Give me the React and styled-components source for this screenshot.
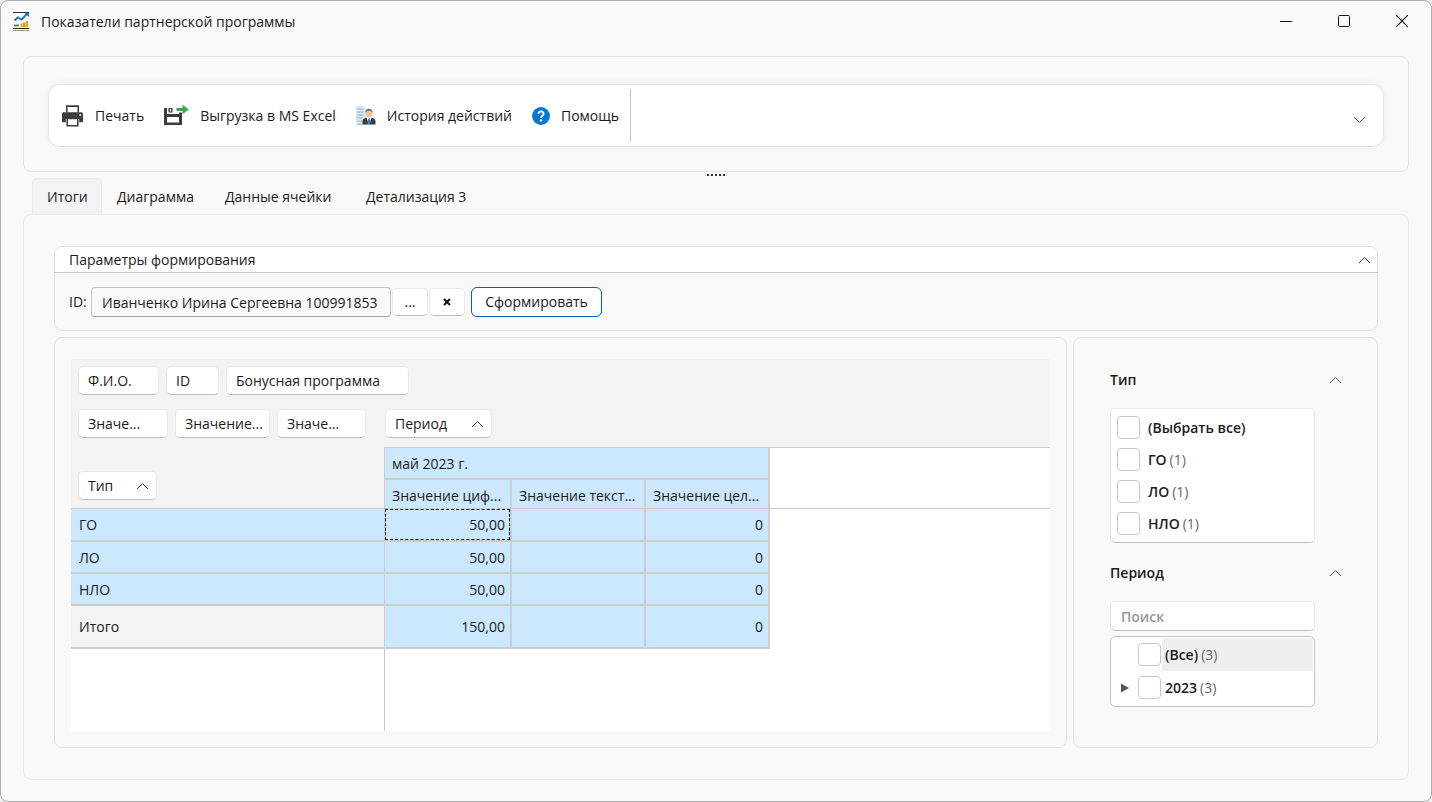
import React from "react";
import styled, { createGlobalStyle, css } from "styled-components";

const Global = createGlobalStyle`
  *, *::before, *::after { box-sizing: border-box; }
  body { margin: 0; background: #ececec; }
  body, button, input { font-family: "Open Sans", "Noto Sans", sans-serif; font-size: 14px; line-height: 20px; color: #1b1b1b; }
  button { cursor: pointer; padding: 0; border: 0; background: none; }
`;

const line = "#e3e3e3";
const selected = "#cce8ff";
const grid = "#cdcdcd";

const Window = styled.main`
  min-height: 100vh;
  display: flex;
  flex-direction: column;
  background: #f9f9f9;
  border: 1px solid #adadad;
  border-radius: 8px;
  padding: 0 22px 21px;
`;
const TitleBar = styled.header`
  display: flex;
  align-items: center;
  height: 40px;
  margin: 0 -22px 15px;
  padding-left: 11px;
  gap: 11px;
`;
const Title = styled.h1`
  flex: 1;
  margin: 0;
  padding-top: 2px;
  font-size: 14px;
  font-weight: 400;
`;
const ButtonRow = styled.div`
  display: flex;
`;
const WindowButton = styled.button`
  width: 58px;
  height: 40px;
  display: grid;
  place-items: center;
`;
const Panel = styled.section`
  border: 1px solid ${line};
  border-radius: 8px;
`;
const ToolbarPanel = styled(Panel)`
  padding: 27px 24px 24px;
`;
const Toolbar = styled.div`
  display: flex;
  height: 63px;
  padding: 4px 17px 4px 12px;
  background: #fff;
  border: 1px solid ${line};
  border-radius: 12px;
  box-shadow: 0 0 8px rgba(0, 0, 0, 0.06);
`;
const ToolGroup = styled.div`
  display: flex;
  gap: 20px;
  padding-right: 11px;
  border-right: 1px solid #c4c4c4;
`;
const Tool = styled.button`
  display: flex;
  align-items: center;
  gap: 11px;
`;
const Overflow = styled.button`
  margin-left: auto;
  padding-top: 6px;
`;
const Splitter = styled.div`
  display: flex;
  justify-content: center;
  align-items: center;
  gap: 2px;
  height: 6px;
`;
const Dot = styled.i`
  width: 2px;
  height: 2px;
  background: #333;
`;
const Tabs = styled.nav`
  display: flex;
  padding-left: 9px;
`;
const Tab = styled.button`
  width: ${(p) => p.$width}px;
  height: 36px;
  padding: 0 0 0 14px;
  text-align: left;
  white-space: nowrap;
  border: 1px solid transparent;
  border-bottom: 0;
  border-radius: 5px 5px 0 0;
  ${(p) => p.$active && css`
    background: #f3f3f3;
    border-color: #ebebeb;
  `}
`;
const Page = styled(Panel)`
  flex: 1;
  display: flex;
  flex-direction: column;
  gap: 6px;
  padding: 31px 30px;
  border-color: #ebebeb;
`;
const ParamHeader = styled.button`
  display: flex;
  align-items: center;
  justify-content: space-between;
  width: 100%;
  height: 26px;
  padding: 1px 6px 0 14px;
  background: #fff;
  border-bottom: 1px solid #c8c8c8;
  border-radius: 8px 8px 0 0;
`;
const ParamBody = styled.form`
  display: flex;
  align-items: center;
  padding: 0 14px;
  height: 57px;
`;
const IdLabel = styled.label`
  width: 22px;
`;
const raised = css`
  background: #fff;
  border: 1px solid #e8e8e8;
  border-bottom-color: #bdbdbd;
  border-radius: 5px;
`;
const IdInput = styled.input`
  width: 300px;
  height: 30px;
  padding: 1px 10px 0;
  background: #f9f9f9;
  border: 1px solid #c4c4c4;
  border-bottom-color: #a5a5a5;
  border-radius: 4px;
`;
const SmallButton = styled.button`
  ${raised}
  display: grid;
  place-items: center;
  width: 36px;
  height: 28px;
  margin-left: 1px;
`;
const PrimaryButton = styled.button`
  width: 131px;
  height: 30px;
  margin-left: 6px;
  background: #fff;
  border: 1px solid #005fb8;
  border-radius: 6px;
`;
const Columns = styled.div`
  flex: 1;
  display: flex;
  gap: 6px;
`;
const PivotPanel = styled(Panel)`
  flex: 1;
  display: flex;
  min-width: 0;
  padding: 21px 16px 16px;
`;
const Pivot = styled.div`
  flex: 1;
  display: flex;
  flex-direction: column;
  min-width: 0;
  background: #fff;
`;
const FieldArea = styled.div`
  display: flex;
  flex-direction: column;
  gap: 14px;
  padding: 7px 7px 9px;
  background: #f3f3f3;
`;
const FieldRow = styled.div`
  display: flex;
  gap: 7px;
`;
const Field = styled.button`
  ${raised}
  display: flex;
  align-items: center;
  justify-content: space-between;
  width: ${(p) => p.$width}px;
  height: 29px;
  padding: 1px 7px 0 9px;
  margin-left: ${(p) => (p.$apart ? 12 : 0)}px;
  white-space: nowrap;
`;
const Table = styled.table`
  width: 100%;
  table-layout: fixed;
  border-collapse: separate;
  border-spacing: 0;
`;
const Corner = styled.th`
  background: #f3f3f3;
  border-right: 1px solid ${grid};
  border-bottom: 1px solid ${grid};
  padding: 16px 0 0 7px;
  font-weight: 400;
`;
const ColumnHead = styled.th`
  height: ${(p) => (p.$last ? 29 : 33)}px;
  padding: ${(p) => (p.$last ? 4 : 2)}px 0 0 7px;
  font-weight: 400;
  text-align: left;
  white-space: nowrap;
  background: ${selected};
  border-right: 2px solid ${grid};
  border-bottom: ${(p) => (p.$last ? 1 : 2)}px solid ${grid};
  border-top: ${(p) => (p.$last ? 0 : 1)}px solid ${grid};
`;
const EmptyHead = styled.td`
  border-top: 1px solid ${grid};
  border-bottom: 1px solid ${grid};
`;
const RowHead = styled.th`
  height: ${(p) => p.$height}px;
  padding: 1px 0 0 8px;
  text-align: left;
  font-weight: 400;
  background: ${(p) => (p.$total ? "#f3f3f3" : selected)};
  border-right: 1px solid ${grid};
  border-bottom: 2px solid ${grid};
`;
const Cell = styled.td`
  padding: ${(p) => (p.$focused ? 0 : "1px 5px 0")};
  text-align: right;
  background: ${selected};
  border-right: 2px solid ${grid};
  border-bottom: 2px solid ${grid};
`;
const FocusBox = styled.div`
  height: 31px;
  padding: 5px 4px 4px;
  border: 1px dashed #111;
`;
const Rest = styled.div`
  flex: 1;
  width: 314px;
  border-right: 1px solid ${grid};
`;
const Side = styled(Panel).attrs({ as: "aside" })`
  width: 305px;
  padding: 25px 35px 25px 36px;
`;
const SideHead = styled.button`
  display: flex;
  width: 100%;
  justify-content: space-between;
  align-items: center;
  height: 32px;
  margin-bottom: 13px;
  padding-top: 1px;
  font-weight: 600;
`;
const CheckList = styled.div`
  ${raised}
  width: 205px;
  height: 135px;
  padding: 2px 6px;
  margin-bottom: 13px;
`;
const CheckRow = styled.label`
  display: flex;
  align-items: center;
  gap: 8px;
  height: 32px;
  font-weight: 600;
`;
const CheckText = styled.span`
  padding-top: 1px;
`;
const Check = styled.input.attrs({ type: "checkbox" })`
  appearance: none;
  width: 23px;
  height: 23px;
  margin: 0;
  background: #fff;
  border: 1px solid #c8c8c8;
  border-radius: 4px;
`;
const Count = styled.span`
  margin-left: 3px;
  font-weight: 400;
  color: #666;
`;
const Search = styled.input`
  ${raised}
  display: block;
  width: 205px;
  height: 30px;
  padding: 0 10px;
  margin-bottom: 5px;
  font-weight: 600;
  &::placeholder { color: #979797; opacity: 1; }
`;
const Tree = styled.div`
  width: 205px;
  padding: 1px 1px 2px 7px;
  background: #fff;
  border: 1px solid #c4c4c4;
  border-radius: 5px;
`;
const TreeRow = styled.label`
  display: flex;
  align-items: center;
  height: 33px;
  font-weight: 600;
`;
const Arrow = styled.span`
  display: flex;
  align-items: center;
  width: 20px;
  padding-left: 3px;
`;
const TreeText = styled.span`
  flex: 1;
  align-self: stretch;
  display: flex;
  align-items: center;
  margin-left: 1px;
  padding: 1px 0 0 3px;
  background: ${(p) => (p.$active ? "#efefef" : "transparent")};
`;

const Chevron = ({ down, color = "#333" }) => (
  <svg width="13" height="8" viewBox="0 0 13 8" fill="none" stroke={color} strokeWidth="1">
    <path d={down ? "M1 1l5.5 5.5L12 1" : "M1 7l5.5-5.5L12 7"} />
  </svg>
);
const AppIcon = () => (
  <svg width="18" height="20" viewBox="0 0 18 20" fill="none">
    <path d="M1 1.500h16" stroke="#333" />
    <path d="M1 17.500h16" stroke="#222" />
    <path d="M1 19.500h16" stroke="#999" />
    <path d="M2.500 9.500L6 6.500l3.500 2L15 3" stroke="#1f78b8" strokeWidth="2" />
    <path d="M12.500 2H17v4z" fill="#1f78b8" />
    <path d="M2 14.500h5" stroke="#777" strokeWidth="2" />
    <path d="M8.500 12.500h2.200V16H8.500zM11 11.500h2.200V16H11zM13.500 10h2.500v6h-2.500z" fill="#e9a11f" />
  </svg>
);
const PrintIcon = () => (
  <svg width="23" height="24" viewBox="0 0 24 24">
    <path d="M6 8V1.700h12V8" fill="none" stroke="#3c3c3c" strokeWidth="1.600" />
    <path d="M3 8h18a2 2 0 0 1 2 2v7.500a1 1 0 0 1-1 1h-3V15H5v3.500H2a1 1 0 0 1-1-1V10a2 2 0 0 1 2-2z" fill="#3c3c3c" />
    <circle cx="20" cy="11" r="1" fill="#fff" />
    <path d="M6.500 14.500h11v7.700h-11z" fill="#fff" stroke="#3c3c3c" strokeWidth="1.600" />
  </svg>
);
const ExportIcon = () => (
  <svg width="25" height="24" viewBox="0 0 25 24" fill="#3c3c3c">
    <path d="M0 4h3v6h12V8.500h3V21H0z" />
    <path d="M4.500 4h4v4.500h-4z" />
    <path d="M6 4.800h1v3H6z" fill="#fff" />
    <path d="M3 13h12v5.500H3z" fill="#fff" />
    <path d="M12.500 4h6V.8l6.300 4.700-6.300 4.700V7h-6z" fill="#3fa35b" />
  </svg>
);
const HistoryIcon = () => (
  <svg width="20" height="20" viewBox="0 0 20 20">
    <path d="M0 0h8l3 3v16.500H0z" fill="#d9e8f1" />
    <path d="M1.500 3h6M1.500 6h6M1.500 9h6M1.500 12h5M1.500 15h5M1.500 18h5" stroke="#93b2c6" />
    <path d="M6.500 18.500v-3q0-3 4-4h5q4 1 4 4v3z" fill="#3c3c3e" />
    <path d="M10 11h6l-3 7z" fill="#e8f2fa" />
    <path d="M12.300 12.500h1.500l.7 4-1.500 2-1.400-2z" fill="#2d7fd0" />
    <ellipse cx="13" cy="7.500" rx="3.500" ry="3.800" fill="#f2c48a" />
    <path d="M9.200 6.800c0-5.500 7.600-5.500 7.600 0l-2-2h-3.600z" fill="#6b6458" />
  </svg>
);
const HelpIcon = () => (
  <svg width="18" height="18" viewBox="0 0 18 18" fill="none">
    <circle cx="9" cy="9" r="9" fill="#0078d7" />
    <path d="M6.500 7C6.500 3.500 11.600 3.700 11.600 6.700 11.600 8.600 9 8.500 9 11" stroke="#fff" strokeWidth="1.800" />
    <circle cx="9" cy="13.400" r="1.200" fill="#fff" />
  </svg>
);

const tabs = [["Итоги", 70], ["Диаграмма", 108], ["Данные ячейки", 141], ["Детализация 3", 131]];
const rows = [["ГО", "50,00", 33], ["ЛО", "50,00", 32], ["НЛО", "50,00", 32], ["Итого", "150,00", 43]];
const types = [["(Выбрать все)"], ["ГО", 1], ["ЛО", 1], ["НЛО", 1]];

function WindowButtons() {
  return (
    <ButtonRow>
      <WindowButton aria-label="Свернуть">
        <svg width="12" height="12" viewBox="0 0 12 12" stroke="#111"><path d="M0 6.500h12" /></svg>
      </WindowButton>
      <WindowButton aria-label="Развернуть">
        <svg width="12" height="12" viewBox="0 0 12 12" fill="none" stroke="#111"><rect x="0.500" y="0.500" width="11" height="11" rx="1" /></svg>
      </WindowButton>
      <WindowButton aria-label="Закрыть">
        <svg width="12" height="12" viewBox="0 0 12 12" stroke="#111" strokeWidth="1.200"><path d="M0 0l12 12M12 0L0 12" /></svg>
      </WindowButton>
    </ButtonRow>
  );
}

export default function App() {
  return (
    <>
      <Global />
      <Window>
        <TitleBar>
          <AppIcon />
          <Title>Показатели партнерской программы</Title>
          <WindowButtons />
        </TitleBar>

        <ToolbarPanel>
          <Toolbar>
            <ToolGroup>
              <Tool><PrintIcon />Печать</Tool>
              <Tool><ExportIcon />Выгрузка в MS Excel</Tool>
              <Tool><HistoryIcon />История действий</Tool>
              <Tool><HelpIcon />Помощь</Tool>
            </ToolGroup>
            <Overflow aria-label="Ещё"><Chevron down color="#555" /></Overflow>
          </Toolbar>
        </ToolbarPanel>

        <Splitter><Dot /><Dot /><Dot /><Dot /><Dot /></Splitter>

        <Tabs>
          {tabs.map(([name, width], i) => (
            <Tab key={name} $width={width} $active={i === 0}>{name}</Tab>
          ))}
        </Tabs>

        <Page>
          <Panel>
            <ParamHeader>Параметры формирования<Chevron /></ParamHeader>
            <ParamBody onSubmit={(e) => e.preventDefault()}>
              <IdLabel htmlFor="partner">ID:</IdLabel>
              <IdInput id="partner" readOnly value="Иванченко Ирина Сергеевна 100991853" />
              <SmallButton type="button">...</SmallButton>
              <SmallButton type="button" aria-label="Очистить">
                <svg width="8" height="8" viewBox="0 0 8 8" stroke="#111" strokeWidth="2">
                  <path d="M1 1l6 6M7 1L1 7" />
                </svg>
              </SmallButton>
              <PrimaryButton>Сформировать</PrimaryButton>
            </ParamBody>
          </Panel>

          <Columns>
            <PivotPanel>
              <Pivot>
                <FieldArea>
                  <FieldRow>
                    <Field $width={81}>Ф.И.О.</Field>
                    <Field $width={53}>ID</Field>
                    <Field $width={183}>Бонусная программа</Field>
                  </FieldRow>
                  <FieldRow>
                    <Field $width={90}>Значе...</Field>
                    <Field $width={95}>Значение...</Field>
                    <Field $width={89}>Значе...</Field>
                    <Field $width={107} $apart>Период<Chevron /></Field>
                  </FieldRow>
                </FieldArea>
                <Table>
                  <colgroup>
                    <col width="314" /><col width="127" /><col width="134" /><col width="124" /><col />
                  </colgroup>
                  <thead>
                    <tr>
                      <Corner rowSpan={2}><Field $width={79}>Тип<Chevron /></Field></Corner>
                      <ColumnHead colSpan={3}>май 2023 г.</ColumnHead>
                      <EmptyHead rowSpan={2} />
                    </tr>
                    <tr>
                      <ColumnHead $last>Значение циф...</ColumnHead>
                      <ColumnHead $last>Значение текст...</ColumnHead>
                      <ColumnHead $last>Значение цел...</ColumnHead>
                    </tr>
                  </thead>
                  <tbody>
                    {rows.map(([name, value, height], i) => (
                      <tr key={name}>
                        <RowHead scope="row" $height={height} $total={i === 3}>{name}</RowHead>
                        <Cell $focused={i === 0}>{i === 0 ? <FocusBox>{value}</FocusBox> : value}</Cell>
                        <Cell />
                        <Cell>0</Cell>
                        <td />
                      </tr>
                    ))}
                  </tbody>
                </Table>
                <Rest />
              </Pivot>
            </PivotPanel>

            <Side>
              <SideHead>Тип<Chevron color="#555" /></SideHead>
              <CheckList>
                {types.map(([name, count]) => (
                  <CheckRow key={name}>
                    <Check />
                    <CheckText>{name}{count && <Count>({count})</Count>}</CheckText>
                  </CheckRow>
                ))}
              </CheckList>
              <SideHead>Период<Chevron color="#555" /></SideHead>
              <Search type="search" placeholder="Поиск" aria-label="Поиск" />
              <Tree>
                <TreeRow>
                  <Arrow />
                  <Check />
                  <TreeText $active>(Все)<Count>(3)</Count></TreeText>
                </TreeRow>
                <TreeRow>
                  <Arrow>
                    <svg width="8" height="10" viewBox="0 0 8 10"><path d="M0 0.500L8 5 0 9.500z" fill="#555" /></svg>
                  </Arrow>
                  <Check />
                  <TreeText>2023<Count>(3)</Count></TreeText>
                </TreeRow>
              </Tree>
            </Side>
          </Columns>
        </Page>
      </Window>
    </>
  );
}
